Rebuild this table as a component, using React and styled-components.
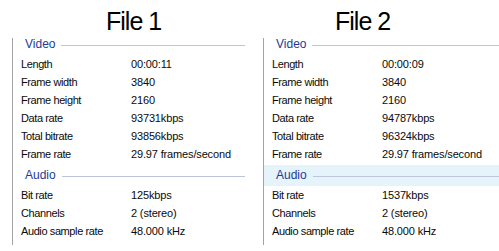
import React from "react";
import styled, { createGlobalStyle } from "styled-components";

const GlobalStyle = createGlobalStyle`
  html, body {
    margin: 0;
    padding: 0;
    background: #ffffff;
  }
  body {
    font-family: "Liberation Sans", Arial, sans-serif;
    color: #0a0a0a;
  }
`;

const Page = styled.div`
  display: grid;
  grid-template-columns: 250px 249px;
  width: 499px;
  height: 251px;
  overflow: hidden;
`;

const Column = styled.section`
  display: flex;
  flex-direction: column;
  min-width: 0;
`;

const Title = styled.h1`
  margin: 9px 0 0;
  padding-left: ${(p) => p.$indent}px;
  font-family: "Liberation Sans", Arial, sans-serif;
  font-weight: 400;
  font-size: 25px;
  line-height: 25px;
  letter-spacing: -1px;
  color: #000000;
  white-space: nowrap;
`;

const Panel = styled.div`
  display: flex;
  flex-direction: column;
  margin: 4px ${(p) => p.$right}px 0 ${(p) => p.$left}px;
  padding-bottom: 5px;
  border-left: 1px solid #a3a3a3;
`;

const GroupHeader = styled.div`
  display: flex;
  align-items: center;
  height: 21px;
  margin-top: 2px;
  padding-left: 12px;
  background: ${(p) => (p.$hot ? "#e5f3fb" : "transparent")};
  font-size: 12px;
  line-height: 21px;
  color: #1e3a96;

  &:first-child {
    margin-top: -4px;
  }
`;

const GroupRule = styled.span`
  flex: 1;
  height: 1px;
  margin: 1px 0 0 6px;
  background: #bcc6d8;
`;

const Row = styled.div`
  display: grid;
  grid-template-columns: 110px 1fr;
  height: 18px;
  padding-left: 8px;
  font-size: 11px;
  line-height: 18px;
  white-space: nowrap;
`;

const Label = styled.span`
  letter-spacing: -0.4px;
  color: #0a0a0a;
`;

const Value = styled.span`
  letter-spacing: -0.15px;
  color: #0a0a0a;
`;

const files = [
  {
    name: "File 1",
    indent: 106,
    left: 12,
    right: 5,
    hotAudio: false,
    video: [
      ["Length", "00:00:11"],
      ["Frame width", "3840"],
      ["Frame height", "2160"],
      ["Data rate", "93731kbps"],
      ["Total bitrate", "93856kbps"],
      ["Frame rate", "29.97 frames/second"],
    ],
    audio: [
      ["Bit rate", "125kbps"],
      ["Channels", "2 (stereo)"],
      ["Audio sample rate", "48.000 kHz"],
    ],
  },
  {
    name: "File 2",
    indent: 85,
    left: 13,
    right: 0,
    hotAudio: true,
    video: [
      ["Length", "00:00:09"],
      ["Frame width", "3840"],
      ["Frame height", "2160"],
      ["Data rate", "94787kbps"],
      ["Total bitrate", "96324kbps"],
      ["Frame rate", "29.97 frames/second"],
    ],
    audio: [
      ["Bit rate", "1537kbps"],
      ["Channels", "2 (stereo)"],
      ["Audio sample rate", "48.000 kHz"],
    ],
  },
];

function Group({ title, rows, hot }) {
  return (
    <>
      <GroupHeader $hot={hot}>
        {title}
        <GroupRule />
      </GroupHeader>
      {rows.map(([label, value]) => (
        <Row key={label}>
          <Label>{label}</Label>
          <Value>{value}</Value>
        </Row>
      ))}
    </>
  );
}

export default function App() {
  return (
    <>
      <GlobalStyle />
      <Page>
        {files.map((f) => (
          <Column key={f.name}>
            <Title $indent={f.indent}>{f.name}</Title>
            <Panel $left={f.left} $right={f.right}>
              <Group title="Video" rows={f.video} />
              <Group title="Audio" rows={f.audio} hot={f.hotAudio} />
            </Panel>
          </Column>
        ))}
      </Page>
    </>
  );
}
